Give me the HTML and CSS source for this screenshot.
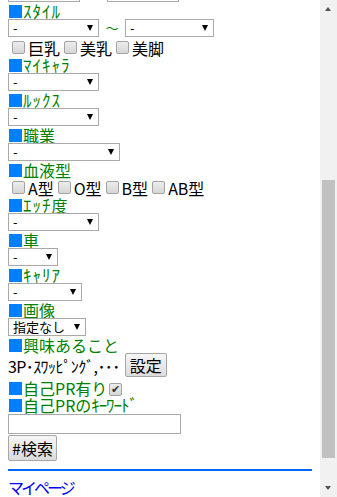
FILE: index.html
```html
<!DOCTYPE html>
<html lang="ja">
  <head>
    <meta charset="UTF-8" />
    <meta name="viewport" content="width=device-width, initial-scale=1.0" />
    <title>詳細検索</title>
    <link rel="stylesheet" href="styles.css">
  </head>
  <body>
    <div class="window">
      <div class="page">
        <form class="search">
          <div class="row row-cut">
            <span class="sel w72"><select><option>-</option></select></span>
            <span class="sel w72 gap"><select><option>-</option></select></span>
          </div>

          <div class="ttl"><span class="mark"></span><span class="kana">ｽﾀｲﾙ</span></div>
          <div class="row">
            <span class="sel w91"><select><option>-</option></select></span>
            <span class="tilde">～</span>
            <span class="sel w89"><select><option>-</option></select></span>
          </div>
          <div class="row checks">
            <label><input type="checkbox" />巨乳</label>
            <label><input type="checkbox" />美乳</label>
            <label><input type="checkbox" />美脚</label>
          </div>

          <div class="ttl"><span class="mark"></span><span class="kana">ﾏｲｷｬﾗ</span></div>
          <div class="row">
            <span class="sel w91"><select><option>-</option></select></span>
          </div>

          <div class="ttl"><span class="mark"></span><span class="kana">ﾙｯｸｽ</span></div>
          <div class="row">
            <span class="sel w91"><select><option>-</option></select></span>
          </div>

          <div class="ttl"><span class="mark"></span>職業</div>
          <div class="row">
            <span class="sel w112"><select><option>-</option></select></span>
          </div>

          <div class="ttl"><span class="mark"></span>血液型</div>
          <div class="row checks">
            <label><input type="checkbox" />A型</label>
            <label><input type="checkbox" />O型</label>
            <label><input type="checkbox" />B型</label>
            <label><input type="checkbox" />AB型</label>
          </div>

          <div class="ttl"><span class="mark"></span><span class="kana">ｴｯﾁ</span>度</div>
          <div class="row">
            <span class="sel w91"><select><option>-</option></select></span>
          </div>

          <div class="ttl"><span class="mark"></span>車</div>
          <div class="row">
            <span class="sel w50"><select><option>-</option></select></span>
          </div>

          <div class="ttl"><span class="mark"></span><span class="kana">ｷｬﾘｱ</span></div>
          <div class="row">
            <span class="sel w74"><select><option>-</option></select></span>
          </div>

          <div class="ttl"><span class="mark"></span>画像</div>
          <div class="row">
            <span class="sel w78"><select><option>指定なし</option></select></span>
          </div>

          <div class="ttl"><span class="mark"></span>興味あること</div>
          <div class="row row-interest">
            <span class="interest">3P･ｽﾜｯﾋﾟﾝｸﾞ,･･･</span>
            <button type="button" class="btn">設定</button>
          </div>

          <div class="ttl ttl-check">
            <span class="mark"></span>自己PR有り<input type="checkbox" checked />
          </div>
          <div class="ttl"><span class="mark"></span>自己PRの<span class="kw">ｷｰﾜｰﾄﾞ</span></div>
          <div class="row row-input">
            <input type="text" class="keyword" />
          </div>
          <div class="row row-submit">
            <button type="submit" class="btn">#検索</button>
          </div>
        </form>

        <hr class="line" />
        <a href="#" class="mypage">マイページ</a>
      </div>

      <div class="scrollbar">
        <div class="arrow up"></div>
        <div class="track"><div class="thumb"></div></div>
        <div class="arrow down"></div>
      </div>
    </div>
  </body>
</html>
```

FILE: styles.css
```css
body {
  margin: 0;
  padding: 0;
  background-color: #fff;
  font-family: "Noto Sans CJK JP", "Noto Sans", sans-serif;
  font-size: 16px;
  color: #000;
}
.window {
  display: flex;
  width: 337px;
  height: 497px;
  overflow: hidden;
}
.page {
  width: 304px;
  padding: 0 8px;
  overflow: hidden;
}
.search {
  margin-top: -16px;
}
.row {
  display: flex;
  align-items: flex-start;
  height: 19px;
}
.ttl {
  display: flex;
  align-items: center;
  height: 16px;
  line-height: 16px;
  color: #008000;
  white-space: nowrap;
}
.mark {
  display: inline-block;
  width: 13px;
  height: 13px;
  margin: 0 1px;
  background-color: #0080ff;
}
.kana {
  font-size: 17px;
  letter-spacing: 1px;
}
.kw {
  font-size: 17px;
  letter-spacing: -1.1px;
}
.sel {
  position: relative;
  display: inline-block;
  height: 18px;
}
.sel select {
  appearance: none;
  -webkit-appearance: none;
  display: block;
  width: 100%;
  height: 18px;
  margin: 0;
  padding: 0 0 0 4px;
  border: 1px solid #a9a9a9;
  border-radius: 0;
  background: #fff;
  font-family: inherit;
  font-size: 13px;
  line-height: 16px;
  color: #000;
}
.sel::after {
  content: "";
  position: absolute;
  right: 6px;
  top: 6px;
  border-left: 3.5px solid transparent;
  border-right: 3.5px solid transparent;
  border-top: 6px solid #000;
  pointer-events: none;
}
.w50 { width: 50px; }
.w72 { width: 72px; }
.w74 { width: 74px; }
.w78 { width: 78px; }
.w89 { width: 89px; }
.w91 { width: 91px; }
.w112 { width: 112px; }
.gap {
  margin-left: 27px;
}
.tilde {
  width: 26px;
  text-align: center;
  color: #008000;
  font-size: 13px;
  line-height: 18px;
}
.checks {
  align-items: center;
  line-height: 16px;
}
.checks label {
  display: inline-flex;
  align-items: center;
  margin-right: 0;
}
input[type="checkbox"] {
  appearance: none;
  -webkit-appearance: none;
  position: relative;
  width: 13px;
  height: 13px;
  margin: 0 3px 0 4px;
  border: 1px solid #a3a3a3;
  border-radius: 2px;
  background: linear-gradient(#ededed, #d6d6d6);
}
input[type="checkbox"]:checked::after {
  content: "✔";
  position: absolute;
  left: 1px;
  top: -2px;
  font-size: 11px;
  line-height: 14px;
  color: #333;
}
.ttl-check {
  height: 18px;
}
.ttl-check input[type="checkbox"] {
  margin: 2px 0 0 2px;
}
.row-interest {
  height: 26px;
  align-items: center;
  gap: 5px;
  line-height: 16px;
}
.interest {
  letter-spacing: -0.6px;
  white-space: nowrap;
}
.btn {
  height: 24px;
  margin: 0;
  padding: 0 4px;
  border: 1px solid #a6a6a6;
  border-radius: 2px;
  background: linear-gradient(#f6f6f6, #dcdcdc);
  font-family: inherit;
  font-size: 16px;
  line-height: 20px;
  color: #000;
  white-space: nowrap;
}
.row-interest .btn {
  margin-top: -2px;
}
.row-input {
  height: 21px;
  margin-top: 1px;
}
.keyword {
  width: 173px;
  height: 20px;
  margin: 0;
  padding: 0 3px;
  box-sizing: border-box;
  border: 1px solid #a9a9a9;
  font-family: inherit;
  font-size: 13px;
}
.row-submit {
  height: 26px;
}
.row-submit .btn {
  height: 26px;
  padding: 0 3px;
}
.line {
  height: 2px;
  margin: 8px 0 0;
  border: none;
  background-color: #0066ff;
}
.mypage {
  display: inline-block;
  margin-top: 6px;
  color: #0000ff;
  text-decoration: none;
  line-height: 20px;
  letter-spacing: -3px;
}
.scrollbar {
  display: flex;
  flex-direction: column;
  width: 17px;
  background-color: #f1f1f1;
}
.arrow {
  position: relative;
  height: 17px;
}
.arrow::after {
  content: "";
  position: absolute;
  left: 5px;
  border-left: 3.5px solid transparent;
  border-right: 3.5px solid transparent;
}
.up::after {
  top: 7px;
  border-bottom: 4px solid #505050;
}
.down::after {
  top: 6px;
  border-top: 4px solid #505050;
}
.track {
  flex: 1;
}
.thumb {
  height: 278px;
  margin: 163px 2px 0;
  background-color: #c1c1c1;
}
```
